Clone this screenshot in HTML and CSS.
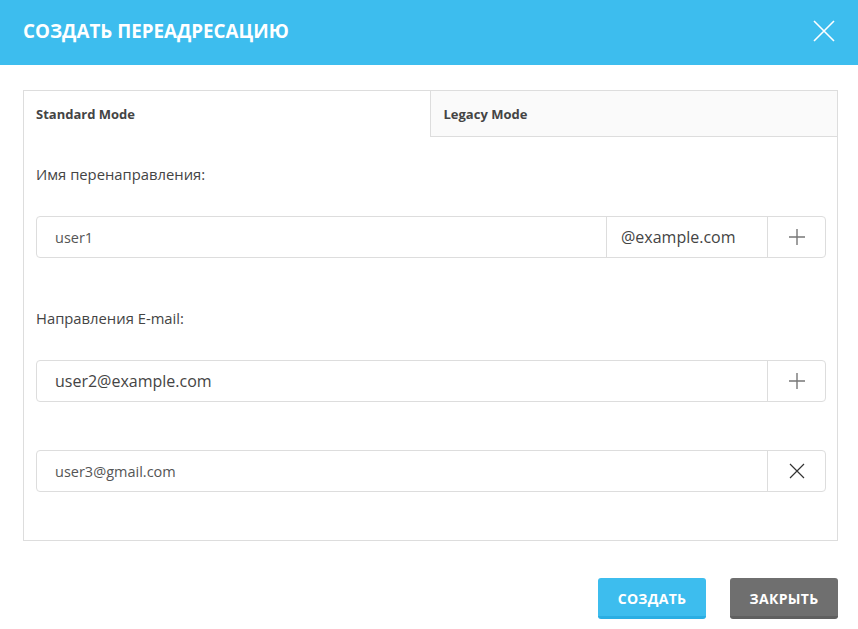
FILE: index.html
```html
<!DOCTYPE html>
<html lang="ru">
<head>
  <meta charset="UTF-8">
  <title>Создать переадресацию</title>
  <link rel="stylesheet" href="styles.css">
</head>
<body>

  <header class="modal-header">
    <div class="modal-title">СОЗДАТЬ ПЕРЕАДРЕСАЦИЮ</div>
    <div class="modal-close">
      <svg width="22" height="22" viewBox="0 0 22 22"><path d="M1 1L21 21M21 1L1 21" stroke="#fff" stroke-width="1.6" fill="none"/></svg>
    </div>
  </header>

  <div class="panel">
    <div class="tabs">
      <div class="tab active">Standard Mode</div>
      <div class="tab">Legacy Mode</div>
    </div>

    <div class="panel-body">
      <div class="label first">Имя перенаправления:</div>
      <div class="input-group">
        <div class="input-text">user1</div>
        <div class="addon">@example.com</div>
        <div class="addon-btn">
          <svg width="20" height="20" viewBox="0 0 20 20"><path d="M10 2V18M2 10H18" stroke="#777" stroke-width="1.4"/></svg>
        </div>
      </div>

      <div class="label">Направления E-mail:</div>
      <div class="input-group">
        <div class="input-text big">user2@example.com</div>
        <div class="addon-btn">
          <svg width="20" height="20" viewBox="0 0 20 20"><path d="M10 2V18M2 10H18" stroke="#777" stroke-width="1.4"/></svg>
        </div>
      </div>

      <div class="input-group spaced">
        <div class="input-text">user3@gmail.com</div>
        <div class="addon-btn">
          <svg width="20" height="20" viewBox="0 0 20 20"><path d="M3 3L17 17M17 3L3 17" stroke="#333" stroke-width="1.2"/></svg>
        </div>
      </div>
    </div>
  </div>

  <div class="modal-footer">
    <div class="btn btn-primary">СОЗДАТЬ</div>
    <div class="btn btn-default">ЗАКРЫТЬ</div>
  </div>

</body>
</html>
```

FILE: styles.css
```css
* {
  box-sizing: border-box;
}

body {
  font-family: "Open Sans", Arial, sans-serif;
  margin: 0;
  padding: 0;
  background: #fff;
  color: #444;
}

.modal-header {
  height: 65px;
  background-color: #3dbdee;
  display: flex;
  align-items: center;
  justify-content: space-between;
  padding: 0 23px 0 23px;
}

.modal-title {
  color: #fff;
  font-size: 18.8px;
  font-weight: 700;
  margin-top: -3px;
}

.modal-close {
  display: flex;
  margin-top: -3px;
}

.panel {
  margin: 25px 20px 0 23px;
  border: 1px solid #ddd;
  height: 451px;
}

.tabs {
  display: flex;
  height: 46px;
}

.tab {
  flex: 1;
  display: flex;
  align-items: center;
  padding-left: 13px;
  font-size: 13px;
  font-weight: 700;
  color: #444;
  background: #fafafa;
  border-bottom: 1px solid #ddd;
  border-left: 1px solid #ddd;
}

.tab.active {
  background: #fff;
  border-bottom: none;
  border-left: none;
  padding-left: 12px;
}

.panel-body {
  padding: 0 11px 0 12px;
}

.label {
  font-size: 14.8px;
  line-height: 18px;
  color: #444;
  margin-top: 51px;
  margin-bottom: 33px;
}

.label.first {
  margin-top: 28px;
}

.input-group {
  display: flex;
  height: 42px;
  border: 1px solid #ddd;
  border-radius: 4px;
}

.input-group.spaced {
  margin-top: 48px;
}

.input-text {
  flex: 1;
  display: flex;
  align-items: center;
  padding-left: 18px;
  font-size: 14.5px;
  color: #555;
}

.input-text.big {
  font-size: 16px;
  color: #444;
}

.addon {
  width: 161px;
  display: flex;
  align-items: center;
  padding-left: 14px;
  border-left: 1px solid #ddd;
  font-size: 16px;
  color: #444;
}

.addon-btn {
  width: 58px;
  display: flex;
  align-items: center;
  justify-content: center;
  border-left: 1px solid #ddd;
}

.modal-footer {
  display: flex;
  justify-content: flex-end;
  gap: 24px;
  margin: 37px 20px 0 0;
}

.btn {
  width: 108px;
  height: 41px;
  border-radius: 3px;
  display: flex;
  align-items: center;
  justify-content: center;
  color: #fff;
  font-size: 14px;
  font-weight: 700;
  letter-spacing: 0.3px;
}

.btn-primary {
  background: #3dbdee;
  border-bottom: 3px solid #2aaee3;
  padding-top: 3px;
}

.btn-default {
  background: #6f6f6f;
  border-bottom: 3px solid #606060;
  padding-top: 3px;
}
```
